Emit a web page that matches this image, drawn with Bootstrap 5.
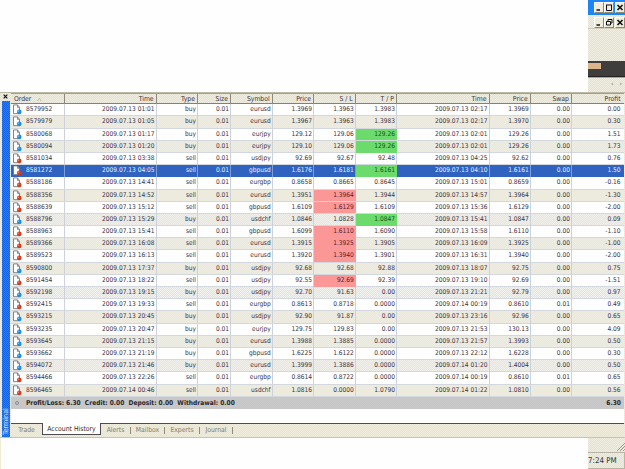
<!DOCTYPE html>
<html lang="en">
<head>
<meta charset="UTF-8">
<meta name="viewport" content="width=device-width, initial-scale=1.0">
<title>Terminal - Account History</title>
<link href="https://cdn.jsdelivr.net/npm/bootstrap@5.3.0/dist/css/bootstrap.min.css" rel="stylesheet">
<style>
body {
  width: 625px;
  height: 469px;
  font-family: "DejaVu Sans Condensed", "DejaVu Sans", sans-serif;
  font-size: 6.55px;
  line-height: 1;
  color: #3c3444;
  background: #fefefe;
}

/* two-tone dither of the 256 colour desktop */
.dither {
  background: repeating-conic-gradient(#e8e2c4 0 25%, #f0eee0 0 50%) 0 0 / 2px 2px fixed;
}

.top-area { height: 92px; }
.side-piece { width: 37px; }

.title-strip { height: 15px; background: #1c86f4; padding: 2px 0 0 6px; }
.child-strip { height: 14px; padding: 2px 0 0 6px; border-bottom: 1px solid #d2cdb8; }
.win-btn {
  width: 10px;
  height: 11px;
  background: #f0eddd;
  border: 1px solid #fff;
  border-right-color: #8b8878;
  border-bottom-color: #8b8878;
}
.win-btn:last-child { margin-left: 1px; }
.win-btn svg, .doc-icon { display: block; }
.toolbar-gap { height: 32px; }
.dark-strip { height: 16px; background: #3f3e3c; border-bottom: 1px solid #222; }
.dark-strip div { width: 13px; height: 6px; margin-top: 2px; background: #dcb58b; }
.arrow-strip { height: 15px; font-size: 7px; color: #77746a; border-top: 1px solid #aaa798; padding: 3px 3px 0 0; gap: 6px; }

.panel { height: 346px; border-top: 1px solid #bdb9a5; border-bottom: 1px solid #c9c4ab; padding-left: 2px; }
.side-bar { width: 8px; }
.close-x { height: 8px; padding: 1px 0 0 1px; }
.side-label {
  width: 8px;
  background: repeating-conic-gradient(#1565e6 0 25%, #267cf0 0 50%) 0 0 / 2px 2px;
  color: #c9e1ff;
  writing-mode: vertical-rl;
  transform: rotate(180deg);
  padding-top: 2px;
  line-height: 8px;
  font-size: 7.1px;
}

.main-part { width: 613px; margin-left: 1px; }
.grid-row {
  display: grid;
  grid-template-columns: 53.5px 92.5px 41.3px 33.2px 41.6px 41.4px 41.7px 41.2px 92.5px 41.3px 41.2px 51.6px;
}
.grid-row > div {
  text-align: right;
  padding-right: 1.4px;
  border-right: 1px solid #cdd1d9;
  white-space: pre;
}
.grid-row > div:first-child { text-align: left; }
.grid-row > div:last-child { padding-right: 3.4px; border-right: 0; }

.grid-head { height: 11.2px; line-height: 10.5px; border-top: 1px solid #a29f90; border-bottom: 1px solid #85806f; font-size: 6.8px; }
.grid-head > div { border-right: 1px solid #8e8a7b; padding-right: 2.4px; }
.grid-head > div:first-child { padding-left: 3px; }

.trade-row { height: 12.2px; line-height: 11.8px; background: #fefefe; border-bottom: 1px solid #d3d7de; }
.trade-row:nth-child(odd) {
  background: repeating-conic-gradient(#e9e4cb 0 25%, #f1f1ee 0 50%) 0 0 / 2px 2px fixed;
}
.trade-row.picked { background: #2f63bf; color: #e7efff; border-color: #2f63bf; }
.trade-row.picked > div { border-right-color: #7c9fdc; }
.trade-row > .hit-tp, .trade-row.picked > .hit-tp { background: #6bdc6b; color: #14521c; border-right-color: #6bdc6b; }
.trade-row > .hit-sl { background: #fc9797; color: #571f2c; border-right-color: #fc9797; }
.doc-icon { width: 10px; height: 11px; margin: 0 4px 0 1px; float: left; }

.sum-row {
  height: 12px;
  line-height: 12px;
  padding: 0 3px 0 4px;
  color: #26262a;
  font-size: 6.6px;
  background: repeating-conic-gradient(#c3c3c3 0 25%, #cbcbcb 0 50%) 0 0 / 2px 2px fixed;
}
.sum-dot { width: 4px; height: 4px; border: 1px solid #8d8d8d; border-radius: 50%; margin: 4px 7px 0 0; }
.below-rows { height: 14.5px; background: #fefefe; }

.tab-strip { height: 14px; border-top: 1px solid #4c4c50; color: #85816f; font-size: 6.8px; line-height: 12px; }
.tab-item { text-align: center; }
.tab-sep { width: 1px; height: 7px; margin-top: 3px; background: #918d7d; }
.tab-open {
  width: 59px;
  height: 11.5px;
  margin-top: -1px;
  line-height: 12px;
  background: #fefefe;
  color: #2d2d33;
  border: 1px solid #4c4c50;
  border-top: 0;
}

.bottom-area { height: 31px; border-left: 1px solid #f0ecd3; }
.status-box { height: 17px; margin-top: 1px; padding-top: 4px; font-size: 7.9px; border: 1px solid #b8b5a5; border-left: 0; color: #333; }
.grip { height: 13px; }
</style>
</head>
<body class="overflow-hidden d-flex flex-column">

<div class="top-area d-flex justify-content-end">
  <div class="side-piece dither">
    <div class="title-strip d-flex">
      <div class="win-btn"><svg width="8" height="9"><path d="M1.500 7h3.500" stroke="#111" stroke-width="1.500"/></svg></div>
      <div class="win-btn"><svg width="8" height="9"><path d="M1 2h6M1.500 2v5.500h5v-5.500" stroke="#111" fill="none"/></svg></div>
      <div class="win-btn"><svg width="8" height="9"><path d="M1.500 2l5 5M6.500 2l-5 5" stroke="#111" stroke-width="1.600"/></svg></div>
    </div>
    <div class="child-strip d-flex">
      <div class="win-btn"><svg width="8" height="9"><path d="M1.500 7h3.500" stroke="#111" stroke-width="1.500"/></svg></div>
      <div class="win-btn"><svg width="8" height="9"><path d="M3 3V1.500h4v3.500H5.500M1.500 3.500h4v3.500h-4z" stroke="#111" fill="none"/></svg></div>
      <div class="win-btn"><svg width="8" height="9"><path d="M1.500 2l5 5M6.500 2l-5 5" stroke="#111" stroke-width="1.600"/></svg></div>
    </div>
    <div class="toolbar-gap"></div>
    <div class="dark-strip d-flex"><div></div></div>
    <div class="arrow-strip d-flex justify-content-end"><span>‹</span><span>›</span></div>
  </div>
</div>

<div class="panel dither d-flex">
  <div class="side-bar d-flex flex-column">
    <div class="close-x"><svg class="d-block" width="5" height="5"><path d="M.7.7l3.600 3.600M4.300.7L.7 4.300" stroke="#111" stroke-width="1.200"/></svg></div>
    <div class="side-label flex-grow-1">Terminal</div>
  </div>
  <div class="main-part">
    <div class="grid-row grid-head dither"><div>Order   <svg width="5" height="5"><path d="M.5 4L2.500 1L4 4" stroke="#b5b19f" stroke-width=".7" fill="none"/></svg></div><div>Time</div><div>Type</div><div>Size</div><div>Symbol</div><div>Price</div><div>S / L</div><div>T / P</div><div>Time</div><div>Price</div><div>Swap</div><div>Profit</div></div>
    <div id="tradeRows"></div>
    <div class="sum-row d-flex fw-bold">
      <div class="sum-dot"></div>
      <div>Profit/Loss: 6.30&nbsp; Credit: 0.00&nbsp; Deposit: 0.00&nbsp; Withdrawal: 0.00</div>
      <div class="ms-auto">6.30</div>
    </div>
    <div class="below-rows"></div>
    <div class="tab-strip dither d-flex">
      <div class="tab-item" style="width:31px">Trade</div>
      <div class="tab-open text-center text-nowrap">Account History</div>
      <div class="tab-item" style="width:29px">Alerts</div><div class="tab-sep"></div>
      <div class="tab-item" style="width:33px">Mailbox</div><div class="tab-sep"></div>
      <div class="tab-item" style="width:34px">Experts</div><div class="tab-sep"></div>
      <div class="tab-item" style="width:32px">Journal</div><div class="tab-sep"></div>
    </div>
  </div>
</div>

<div class="bottom-area d-flex justify-content-end">
  <div class="side-piece dither">
    <div class="grip d-flex justify-content-end align-items-end"><svg width="8" height="8"><path d="M0 8L8 0M3 8l5-5M6 8l2-2" stroke="#9b988a"/></svg></div>
    <div class="status-box">7:24 PM</div>
  </div>
</div>

<script src="https://cdn.jsdelivr.net/npm/bootstrap@5.3.0/dist/js/bootstrap.bundle.min.js"></script>
<script>
// order, open time, type, symbol, price, S/L, T/P, close time, price, swap, profit
const trades = `8579952|13 01:01|buy|eurusd|1.3969|1.3963|1.3983|13 02:17|1.3969|0.00|0.00
8579979|13 01:05|buy|eurusd|1.3967|1.3963|1.3983|13 02:17|1.3970|0.00|0.30
8580068|13 01:17|buy|eurjpy|129.12|129.06|129.26*|13 02:01|129.26|0.00|1.51
8580094|13 01:20|buy|eurjpy|129.10|129.06|129.26*|13 02:01|129.26|0.00|1.73
8581034|13 03:38|sell|usdjpy|92.69|92.67|92.48|13 04:25|92.62|0.00|0.76
8581272|13 04:05|sell|gbpusd|1.6176|1.6181|1.6161*|13 04:10|1.6161|0.00|1.50
8588186|13 14:41|sell|eurgbp|0.8658|0.8665|0.8645|13 15:01|0.8659|0.00|-0.16
8588356|13 14:52|sell|eurusd|1.3951|1.3964*|1.3944|13 14:57|1.3964|0.00|-1.30
8588639|13 15:12|sell|gbpusd|1.6109|1.6129*|1.6109|13 15:36|1.6129|0.00|-2.00
8588796|13 15:29|buy|usdchf|1.0846|1.0828|1.0847*|13 15:41|1.0847|0.00|0.09
8588963|13 15:41|sell|gbpusd|1.6099|1.6110*|1.6090|13 15:58|1.6110|0.00|-1.10
8589366|13 16:08|sell|eurusd|1.3915|1.3925*|1.3905|13 16:09|1.3925|0.00|-1.00
8589523|13 16:13|sell|eurusd|1.3920|1.3940*|1.3901|13 16:31|1.3940|0.00|-2.00
8590800|13 17:37|buy|usdjpy|92.68|92.68|92.88|13 18:07|92.75|0.00|0.75
8591454|13 18:22|sell|usdjpy|92.55|92.69*|92.39|13 19:10|92.69|0.00|-1.51
8592198|13 19:15|buy|usdjpy|92.70|91.63|0.00|13 21:21|92.79|0.00|0.97
8592415|13 19:33|sell|eurgbp|0.8613|0.8718|0.0000|14 00:19|0.8610|0.01|0.49
8593215|13 20:45|buy|usdjpy|92.90|91.87|0.00|13 23:16|92.96|0.00|0.65
8593235|13 20:47|buy|eurjpy|129.75|129.83|0.00|13 21:53|130.13|0.00|4.09
8593645|13 21:15|buy|eurusd|1.3988|1.3885|0.0000|13 21:57|1.3993|0.00|0.50
8593662|13 21:19|buy|gbpusd|1.6225|1.6122|0.0000|13 22:12|1.6228|0.00|0.30
8594072|13 21:46|buy|eurusd|1.3999|1.3886|0.0000|14 01:20|1.4004|0.00|0.50
8594466|13 22:26|sell|eurgbp|0.8614|0.8722|0.0000|14 00:19|0.8610|0.01|0.65
8596465|14 00:46|sell|usdchf|1.0816|0.0000|1.0790|14 01:22|1.0810|0.00|0.56`.split('\n').map(l => l.split('|'));

const icon = type => `<svg class="doc-icon" viewBox="0 0 10 11"><path d="M1.500 .9h4l2 2.500v6.300h-6z" fill="#fff" stroke="#77777b" stroke-width=".9"/><path d="M5.500 .9v2.500h2" fill="none" stroke="#77777b" stroke-width=".8"/><circle cx="7.300" cy="7.900" r="2.300" fill="${type === 'buy' ? '#1c8fdc' : '#d83a1c'}"/><circle cx="6.700" cy="7.200" r=".6" fill="#fff" opacity=".6"/></svg>`;

// a star marks the level that closed the trade
const level = (value, cls) => value.endsWith('*')
  ? `<div class="${cls}">${value.slice(0, -1)}</div>`
  : `<div>${value}</div>`;

// the white rows come first, so an empty row shifts the striping
document.getElementById('tradeRows').innerHTML = '<div class="d-none"></div>' + trades.map(t => {
  const [order, open, type, symbol, price, sl, tp, close, closePrice, swap, profit] = t;
  return `<div class="grid-row trade-row${order === '8581272' ? ' picked' : ''}">
<div>${icon(type)}${order}</div><div>2009.07.${open}</div><div>${type}</div><div>0.01</div><div>${symbol}</div><div>${price}</div>${level(sl, 'hit-sl')}${level(tp, 'hit-tp')}<div>2009.07.${close}</div><div>${closePrice}</div><div>${swap}</div><div>${profit}</div></div>`;
}).join('');
</script>
</body>
</html>
